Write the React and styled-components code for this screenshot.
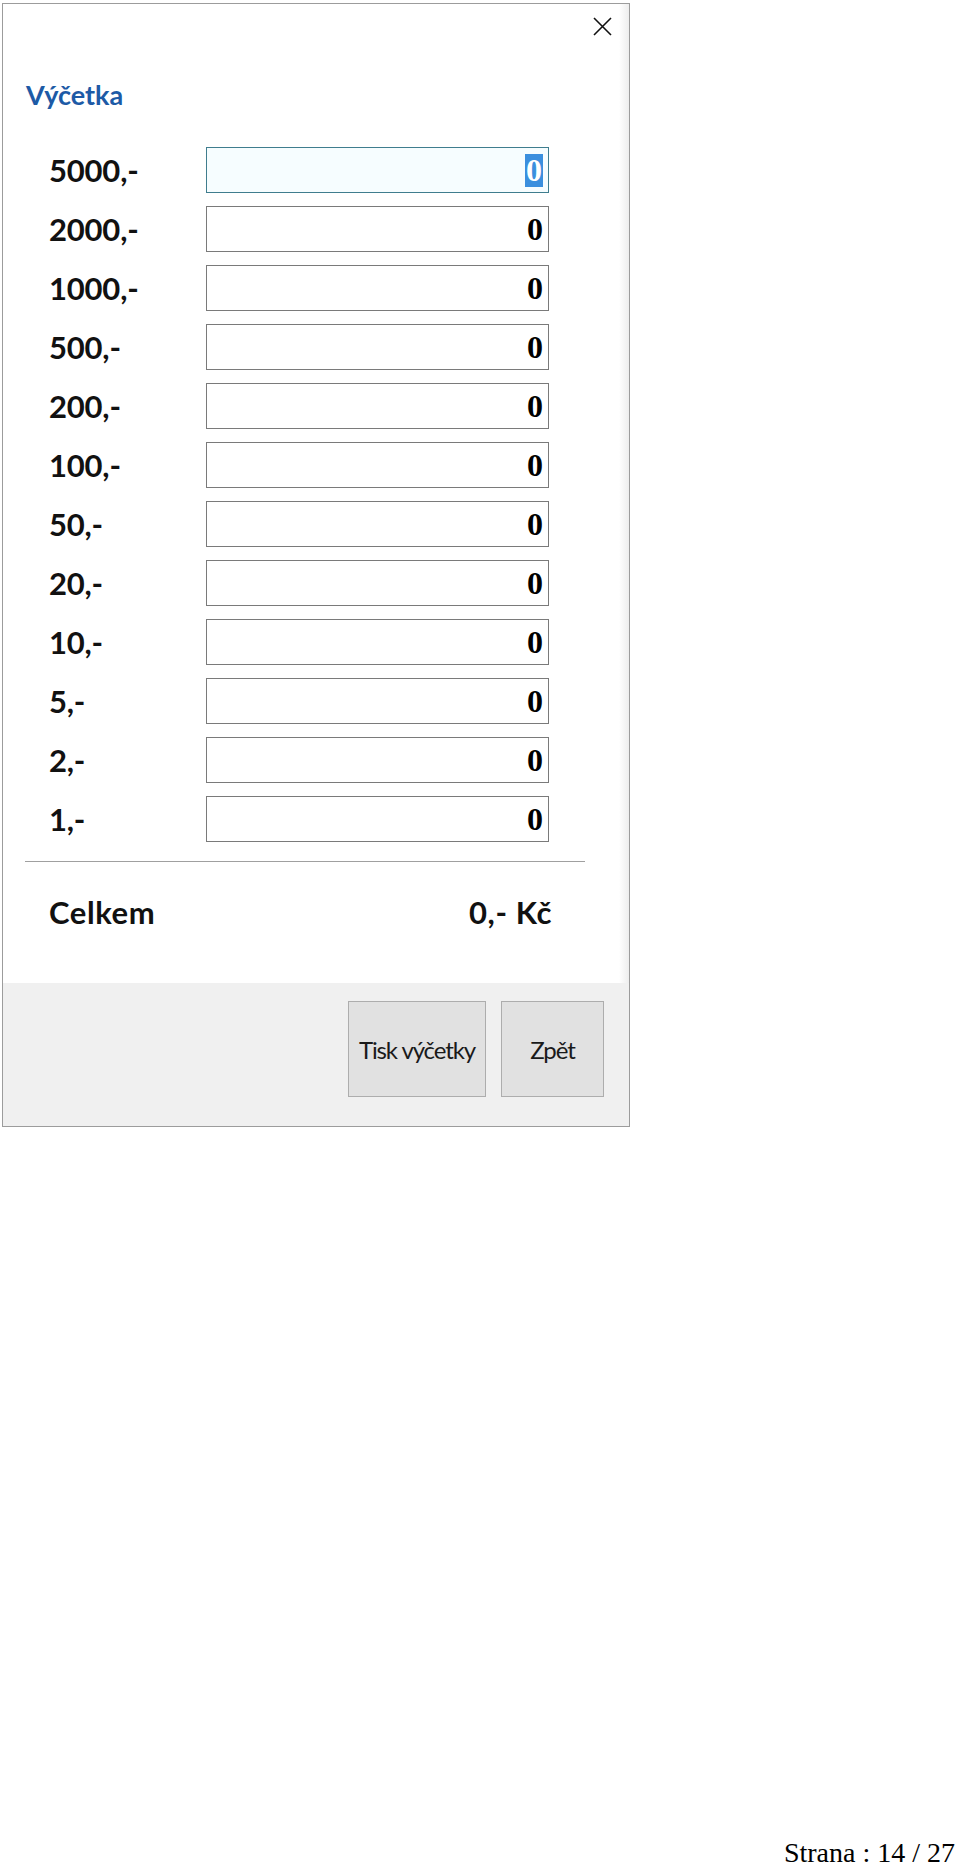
import React from 'react'
import styled, { createGlobalStyle } from 'styled-components'

const denominations = ['5000', '2000', '1000', '500', '200', '100', '50', '20', '10', '5', '2', '1']

function CloseIcon() {
    return (
        <svg width="19" height="19" viewBox="0 0 19 19">
            <path d="M1 1 L18 18 M18 1 L1 18" stroke="#111" strokeWidth="1.6" fill="none" />
        </svg>
    )
}

function App() {
    return (
        <Page>
            <GlobalStyle />
            <Dialog>
                <Content>
                    <Header>
                        <CloseButton><CloseIcon /></CloseButton>
                    </Header>
                    <Title>Výčetka</Title>
                    <Rows>
                        {denominations.map((d, i) => (
                            <Row key={d}>
                                <Label>{d},-</Label>
                                <Field focused={i === 0}>
                                    {i === 0 ? <Selected>0</Selected> : '0'}
                                </Field>
                            </Row>
                        ))}
                    </Rows>
                    <Separator />
                    <TotalRow>
                        <span>Celkem</span>
                        <span>0,- Kč</span>
                    </TotalRow>
                </Content>
                <Footer>
                    <Button wide>Tisk výčetky</Button>
                    <Button>Zpět</Button>
                </Footer>
            </Dialog>
            <PageNumber>Strana : 14 / 27</PageNumber>
        </Page>
    )
}

export default App

const GlobalStyle = createGlobalStyle`
body {
    margin: 0;
    background: #fff;
    font-family: Lato, "Liberation Sans", sans-serif;
}
`

const Page = styled.div`
height: 1869px;
display: flex;
flex-direction: column;
overflow: hidden;
`

const Dialog = styled.div`
box-sizing: border-box;
margin: 3px 0 0 2px;
width: 628px;
height: 1124px;
border: 1px solid #9c9c9c;
display: flex;
flex-direction: column;
background: linear-gradient(to right, #fff calc(100% - 10px), #ededed);
`

const Content = styled.div`
flex: 1;
display: flex;
flex-direction: column;
`

const Header = styled.div`
display: flex;
justify-content: flex-end;
padding: 13px 17px 0 0;
`

const CloseButton = styled.div`
width: 19px;
height: 19px;
display: flex;
`

const Title = styled.div`
margin-top: 43px;
padding-left: 23px;
font-weight: 700;
font-size: 27px;
line-height: 32px;
color: #1d5aa6;
`

const Rows = styled.div`
margin-top: 36px;
padding-left: 46px;
display: flex;
flex-direction: column;
gap: 13px;
`

const Row = styled.div`
display: flex;
align-items: center;
height: 46px;
`

const Label = styled.div`
width: 157px;
font-weight: 700;
font-size: 31px;
color: #111;
letter-spacing: -0.2px;
`

const Field = styled.div`
box-sizing: border-box;
width: 343px;
height: 46px;
border: 1px solid ${p => (p.focused ? '#3f7d8e' : '#7a7a7a')};
background: ${p => (p.focused ? '#f6fdff' : '#fff')};
display: flex;
align-items: center;
justify-content: flex-end;
padding-right: 5px;
font-family: "Liberation Serif", serif;
font-weight: 700;
font-size: 32px;
color: #000;
`

const Selected = styled.span`
background: #3b8fde;
color: #fff;
padding: 0 1px;
line-height: 33px;
`

const Separator = styled.div`
margin: 19px 0 0 22px;
width: 560px;
height: 1px;
background: #a0a0a0;
`

const TotalRow = styled.div`
margin-top: 32px;
padding-left: 46px;
width: 503px;
display: flex;
justify-content: space-between;
font-weight: 700;
font-size: 31px;
letter-spacing: 0.6px;
line-height: 36px;
color: #111;
`

const Footer = styled.div`
height: 143px;
box-sizing: border-box;
background: #f0f0f0;
display: flex;
justify-content: flex-end;
align-items: flex-start;
gap: 15px;
padding: 18px 25px 0 0;
`

const Button = styled.div`
box-sizing: border-box;
width: ${p => (p.wide ? '138px' : '103px')};
height: 96px;
background: #e1e1e1;
border: 1px solid #adadad;
display: flex;
align-items: center;
justify-content: center;
font-size: 24px;
letter-spacing: -1.1px;
color: #1a1a1a;
`

const PageNumber = styled.div`
margin-top: auto;
padding-right: 5px;
text-align: right;
font-family: "Liberation Serif", serif;
font-size: 28px;
line-height: 32px;
color: #000;
`
